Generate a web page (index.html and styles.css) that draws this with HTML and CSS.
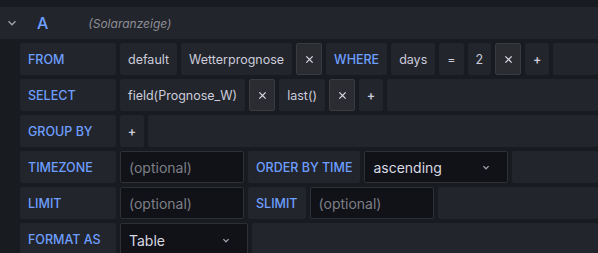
FILE: index.html
```html
<!DOCTYPE html>
<html lang="en">
<head>
  <meta charset="UTF-8">
  <title>Query A</title>
  <link rel="stylesheet" href="styles.css">
</head>
<body>
  <div class="query-editor">
    <div class="query-header">
      <svg class="collapse-icon" viewBox="0 0 16 16">
        <path d="M4 6l4 4 4-4"></path>
      </svg>
      <span class="query-name">A</span>
      <span class="query-source">(Solaranzeige)</span>
    </div>

    <div class="query-rows">
      <div class="form-row">
        <span class="keyword label-col">FROM</span>
        <span class="segment">default</span>
        <span class="segment">Wetterprognose</span>
        <span class="btn-remove"><svg viewBox="0 0 10 10"><path d="M1.5 1.5l7 7M8.5 1.5l-7 7"></path></svg></span>
        <span class="keyword">WHERE</span>
        <span class="segment">days</span>
        <span class="segment">=</span>
        <span class="segment">2</span>
        <span class="btn-remove"><svg viewBox="0 0 10 10"><path d="M1.5 1.5l7 7M8.5 1.5l-7 7"></path></svg></span>
        <span class="segment plus">+</span>
        <span class="filler"></span>
      </div>

      <div class="form-row">
        <span class="keyword label-col">SELECT</span>
        <span class="segment">field(Prognose_W)</span>
        <span class="btn-remove"><svg viewBox="0 0 10 10"><path d="M1.5 1.5l7 7M8.5 1.5l-7 7"></path></svg></span>
        <span class="segment">last()</span>
        <span class="btn-remove"><svg viewBox="0 0 10 10"><path d="M1.5 1.5l7 7M8.5 1.5l-7 7"></path></svg></span>
        <span class="segment plus">+</span>
        <span class="filler"></span>
      </div>

      <div class="form-row">
        <span class="keyword label-col">GROUP BY</span>
        <span class="segment plus">+</span>
        <span class="filler"></span>
      </div>

      <div class="form-row">
        <span class="keyword label-col">TIMEZONE</span>
        <span class="input input-opt">(optional)</span>
        <span class="keyword">ORDER BY TIME</span>
        <span class="input select select-order">ascending
          <svg class="caret" viewBox="0 0 16 16"><path d="M5 7l3 3 3-3"></path></svg>
        </span>
        <span class="filler"></span>
      </div>

      <div class="form-row">
        <span class="keyword label-col">LIMIT</span>
        <span class="input input-opt">(optional)</span>
        <span class="keyword">SLIMIT</span>
        <span class="input input-opt">(optional)</span>
        <span class="filler"></span>
      </div>

      <div class="form-row">
        <span class="keyword label-col">FORMAT AS</span>
        <span class="input select select-format">Table
          <svg class="caret" viewBox="0 0 16 16"><path d="M5 7l3 3 3-3"></path></svg>
        </span>
        <span class="filler"></span>
      </div>
    </div>
  </div>
</body>
</html>
```

FILE: styles.css
```css
body {
  margin: 0;
  background-color: #181b1f;
  font-family: Inter, "Noto Sans", sans-serif;
  font-size: 12.5px;
  color: #ccccdc;
  overflow: hidden;
}

.query-editor {
  padding-top: 7px;
}

.query-header {
  display: flex;
  align-items: center;
  height: 32px;
  background-color: #22252b;
}

.collapse-icon {
  width: 14px;
  height: 14px;
  margin-left: 5px;
  stroke: #9fa0a8;
  stroke-width: 1.6;
  fill: none;
}

.query-name {
  margin-left: 18px;
  color: #6e9fff;
  font-size: 16px;
  font-weight: 500;
}

.query-source {
  margin-left: 40px;
  color: #8e8e96;
  font-size: 12px;
  font-style: italic;
}

.query-rows {
  display: flex;
  flex-direction: column;
  gap: 4px;
  padding: 4px 0 0 20px;
}

.form-row {
  display: flex;
  gap: 4px;
  height: 32px;
}

.keyword,
.segment,
.filler {
  display: flex;
  align-items: center;
  padding: 0 8px;
  background-color: #22252b;
  border-radius: 2px;
  white-space: nowrap;
}

.keyword {
  color: #6e9fff;
  font-weight: 500;
}

.label-col {
  width: 80px;
}

.segment.plus {
  width: 8px;
  justify-content: center;
  font-weight: 600;
}

.filler {
  flex: 1;
}

.btn-remove {
  display: flex;
  align-items: center;
  justify-content: center;
  width: 24px;
  background-color: #2a2c31;
  border: 1px solid #393b41;
  border-radius: 2px;
}

.btn-remove svg {
  width: 9px;
  height: 9px;
  stroke: #d8d9e4;
  stroke-width: 1.4;
  fill: none;
}

.input {
  display: flex;
  align-items: center;
  box-sizing: border-box;
  padding: 0 8px;
  background-color: #111217;
  border: 1px solid #2e3036;
  border-radius: 2px;
  font-size: 14px;
}

.input-opt {
  width: 124px;
  color: #7d7f87;
}

.select {
  justify-content: space-between;
  color: #d8d9e2;
}

.select-order {
  width: 144px;
}

.select-format {
  width: 128px;
  height: 34px;
}

.caret {
  width: 14px;
  height: 14px;
  margin-right: 6px;
  stroke: #a0a1aa;
  stroke-width: 1.5;
  fill: none;
}
```
